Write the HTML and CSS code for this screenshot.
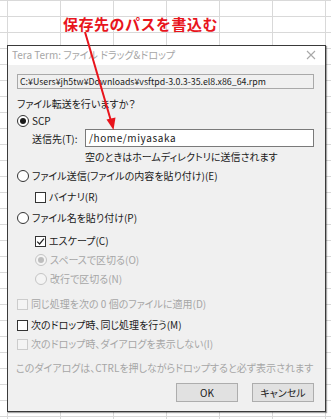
FILE: index.html
```html
<!DOCTYPE html>
<html lang="ja">

<head>
    <meta charset="UTF-8">
    <meta name="viewport" content="width=device-width, initial-scale=1.0">
    <title>Tera Term ドラッグ&amp;ドロップ</title>
    <link rel="stylesheet" href="styles.css">
</head>

<body>
    <div class="sheet">
        <!-- 注記 -->
        <h1 class="memo">保存先のパスを書込む</h1>

        <div class="dialog">
            <div class="titlebar">
                <span>Tera Term: ファイル ドラッグ&amp;ドロップ</span>
                <svg class="close" width="10" height="10" viewBox="0 0 10 10">
                    <path d="M1 1L9 9M9 1L1 9" stroke="#a8a8a8" stroke-width="1.1" fill="none" />
                </svg>
            </div>

            <div class="dialog_body">
                <div class="path">C:¥Users¥jh5tw¥Downloads¥vsftpd-3.0.3-35.el8.x86_64.rpm</div>
                <p class="row question">ファイル転送を行いますか？</p>

                <div class="row scp"><span class="radio checked"></span>SCP</div>
                <div class="dest">
                    <span class="dest_label">送信先(T):</span>
                    <div class="input">/home/miyasaka</div>
                </div>
                <p class="row hint">空のときはホームディレクトリに送信されます</p>

                <div class="row send"><span class="radio"></span>ファイル送信(ファイルの内容を貼り付け)(E)</div>
                <div class="row sub binary"><span class="check"></span>バイナリ(R)</div>

                <div class="row paste"><span class="radio"></span>ファイル名を貼り付け(P)</div>
                <div class="row sub escape">
                    <span class="check">
                        <svg width="9" height="9" viewBox="0 0 9 9">
                            <path d="M1.2 4.6L3.6 7L8 1.6" stroke="#222" stroke-width="1.2" fill="none" />
                        </svg>
                    </span>エスケープ(C)
                </div>
                <div class="row sub off space"><span class="radio checked"></span>スペースで区切る(O)</div>
                <div class="row sub off newline"><span class="radio"></span>改行で区切る(N)</div>

                <div class="row off same"><span class="check"></span>同じ処理を次の 0 個のファイルに適用(D)</div>
                <div class="row next"><span class="check"></span>次のドロップ時、同じ処理を行う(M)</div>
                <div class="row off nodialog"><span class="check"></span>次のドロップ時、ダイアログを表示しない(I)</div>

                <p class="row note">このダイアログは、CTRLを押しながらドロップすると必ず表示されます</p>

                <div class="buttons">
                    <button class="btn">OK</button>
                    <button class="btn">キャンセル</button>
                </div>
            </div>
        </div>

        <!-- 矢印 -->
        <svg class="arrow" width="331" height="419" viewBox="0 0 331 419">
            <line x1="85" y1="32" x2="111" y2="121" stroke="#e8141c" stroke-width="2" />
            <path d="M113.5 130L106.5 119.5L115.5 117.5Z" fill="#e8141c" />
        </svg>
    </div>
</body>

</html>
```

FILE: styles.css
```css
* {
    padding: 0;
    margin: 0;
    box-sizing: border-box;
}

body {
    width: 331px;
    height: 419px;
    overflow: hidden;
    font-family: "Noto Sans CJK JP", "Noto Sans", sans-serif;
    font-feature-settings: "palt";
    font-size: 10px;
    color: #1a1a1a;
}

.sheet {
    position: relative;
    width: 331px;
    height: 419px;
    background-color: #ffffff;
    background-image:
        linear-gradient(to right, #d9d9d9 1px, transparent 1px),
        linear-gradient(to bottom, #d9d9d9 1px, transparent 1px);
    background-size: 53px 16px;
    background-position: 7px 0;
}

.memo {
    height: 45px;
    padding: 15px 0 0 63px;
    font-size: 15px;
    line-height: 18px;
    font-weight: 700;
    letter-spacing: 0.5px;
    font-feature-settings: normal;
    color: #e8141c;
}

.dialog {
    width: 319px;
    height: 367px;
    margin-left: 7px;
    border: 1px solid #3a3a3a;
    background: #f0f0f0;
    box-shadow: 1px 1px 1px rgba(0, 0, 0, 0.35);
}

.titlebar {
    height: 19px;
    background: #ffffff;
    display: flex;
    align-items: center;
    justify-content: space-between;
    padding: 0 9px 1px 4px;
    color: #a6a6a6;
    line-height: 18px;
}

.dialog_body {
    padding: 9px 11px 0 9px;
    display: flex;
    flex-direction: column;
}

.path {
    height: 15px;
    border: 1px solid #a9a9a9;
    padding-left: 2px;
    line-height: 13px;
    font-size: 8.8px;
    color: #222;
    white-space: nowrap;
    overflow: hidden;
}

.row {
    height: 16px;
    line-height: 16px;
    display: flex;
    align-items: center;
    white-space: nowrap;
}

.sub {
    padding-left: 18px;
}

.off {
    color: #a6a6a6;
}

.question { margin-top: 7px; }
.scp { margin-top: 1px; }
.hint { margin-top: 2px; padding-left: 68px; }
.send { margin-top: 3px; }
.binary { margin-top: 5px; }
.paste { margin-top: 5px; }
.escape { margin-top: 7px; }
.space { margin-top: 3px; }
.newline { margin-top: 3px; }
.same { margin-top: 9px; }
.next { margin-top: 5px; }
.nodialog { margin-top: 3px; }
.note { margin-top: 8px; margin-left: -1px; color: #a6a6a6; }

.dest {
    height: 18px;
    display: flex;
    align-items: center;
    padding-left: 15px;
}

.dest_label {
    width: 53px;
}

.input {
    flex: 1;
    height: 18px;
    border: 1px solid #7a7a7a;
    background: #ffffff;
    padding-left: 3px;
    line-height: 16px;
    letter-spacing: 0.6px;
}

.radio {
    width: 12px;
    height: 12px;
    margin-right: 3px;
    border: 1px solid #333333;
    border-radius: 50%;
    background: #ffffff;
    display: flex;
    align-items: center;
    justify-content: center;
    flex-shrink: 0;
}

.radio.checked::after {
    content: "";
    width: 6px;
    height: 6px;
    border-radius: 50%;
    background: #1a1a1a;
}

.off .radio {
    border-color: #c4c4c4;
    background: #f4f4f4;
}

.off .radio.checked::after {
    background: #bdbdbd;
}

.check {
    width: 11px;
    height: 11px;
    margin-right: 3px;
    border: 1px solid #333333;
    background: #ffffff;
    display: flex;
    align-items: center;
    justify-content: center;
    flex-shrink: 0;
}

.off .check {
    border-color: #cccccc;
    background: #f4f4f4;
}

.buttons {
    margin-top: 7px;
    display: flex;
    justify-content: flex-end;
    gap: 14px;
}

.btn {
    width: 62px;
    height: 19px;
    border: 1px solid #adadad;
    background: #e1e1e1;
    font-family: inherit;
    font-feature-settings: inherit;
    font-size: 10px;
    color: #1a1a1a;
}

.arrow {
    position: absolute;
    left: 0;
    top: 0;
    pointer-events: none;
}
```
